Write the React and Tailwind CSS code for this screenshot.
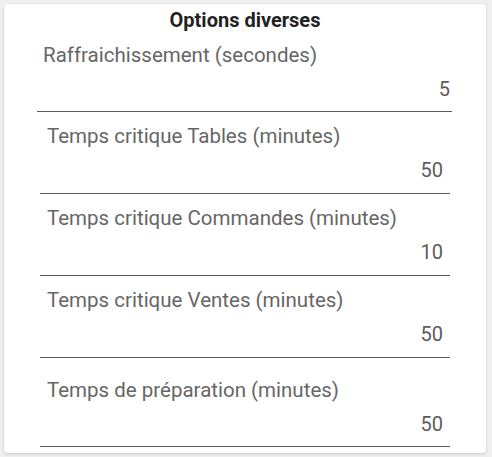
import React from "react";

function Field({ label, value, outer, labelPad, valuePad }) {
  return (
    <div className={`border-b border-[#5a5a5a] ${outer}`}>
      <div className={`h-6 leading-6 text-[20.5px] text-[#666666] whitespace-nowrap ${labelPad}`}>{label}</div>
      <div className={`mt-[10px] h-6 leading-6 text-[20px] text-[#5c5c5c] text-right ${valuePad}`}>{value}</div>
    </div>
  );
}

export default function App() {
  return (
    <div className="w-[492px] h-[457px] bg-[#efefef] pt-1 pl-1" style={{ fontFamily: "Roboto, 'Liberation Sans', sans-serif" }}>
      <div className="w-[482px] h-[449px] bg-white rounded-[4px] shadow-[0_1px_3px_rgba(0,0,0,0.18)] pt-1 pb-[6px] flex flex-col">
        <div className="h-6 leading-6 text-[20px] font-bold text-[#222222] text-center">Options diverses</div>
        <Field label="Raffraichissement (secondes)" value="5" outer="ml-[33px] w-[415px] pt-[11px] pb-[10px]" labelPad="pl-[6px]" valuePad="pr-[2px]" />
        <Field label="Temps critique Tables (minutes)" value="50" outer="ml-[36px] w-[410px] pt-3 pb-[11px]" labelPad="pl-[7px]" valuePad="pr-[7px]" />
        <Field label="Temps critique Commandes (minutes)" value="10" outer="ml-[36px] w-[410px] pt-3 pb-[11px]" labelPad="pl-[7px]" valuePad="pr-[7px]" />
        <Field label="Temps critique Ventes (minutes)" value="50" outer="ml-[36px] w-[410px] pt-3 pb-[11px]" labelPad="pl-[7px]" valuePad="pr-[7px]" />
        <Field label="Temps de préparation (minutes)" value="50" outer="ml-[36px] w-[410px] pt-5 pb-[10px]" labelPad="pl-[7px]" valuePad="pr-[7px]" />
      </div>
    </div>
  );
}
